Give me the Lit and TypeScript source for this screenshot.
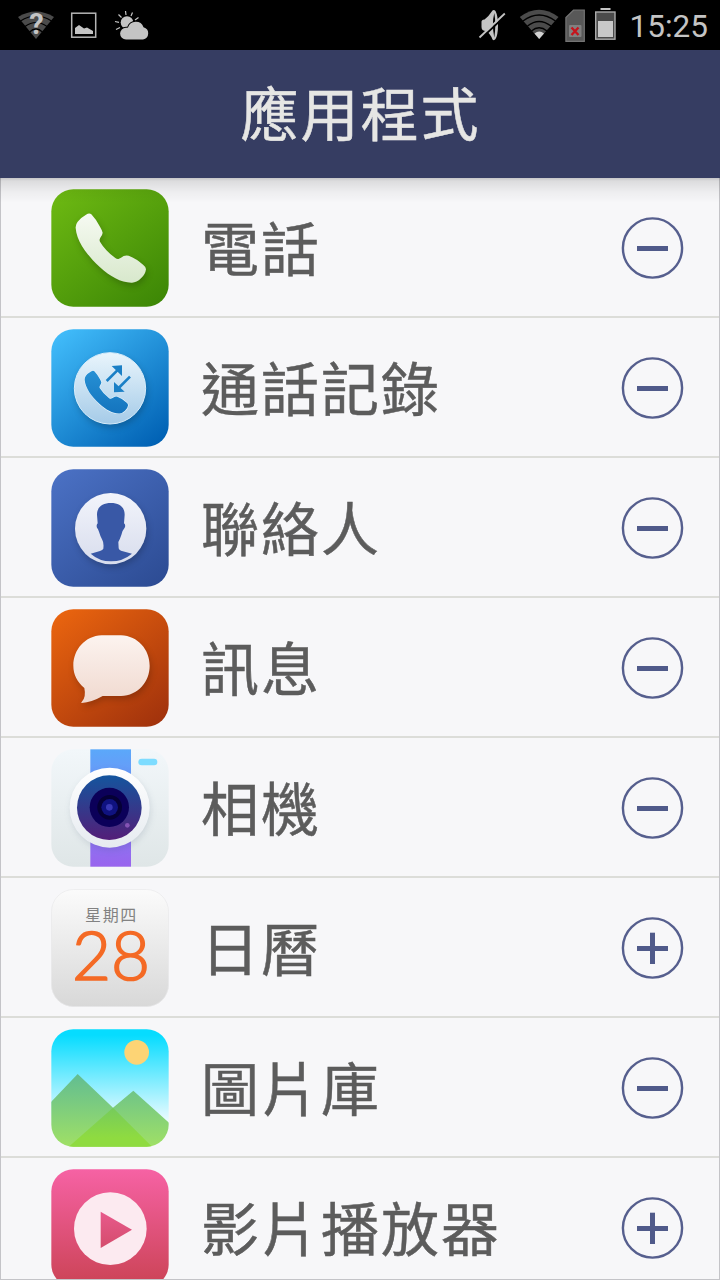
import { LitElement, html, svg, css } from 'lit';
import type { TemplateResult, SVGTemplateResult } from 'lit';
import { customElement, property } from 'lit/decorators.js';

type IconName = 'phone' | 'calls' | 'contacts' | 'messages' | 'camera' | 'calendar' | 'gallery' | 'video';

interface AppEntry {
  icon: IconName;
  label: string;
  added: boolean;
}

const apps: AppEntry[] = [
  { icon: 'phone', label: '電話', added: true },
  { icon: 'calls', label: '通話記錄', added: true },
  { icon: 'contacts', label: '聯絡人', added: true },
  { icon: 'messages', label: '訊息', added: true },
  { icon: 'camera', label: '相機', added: true },
  { icon: 'calendar', label: '日曆', added: false },
  { icon: 'gallery', label: '圖片庫', added: true },
  { icon: 'video', label: '影片播放器', added: false },
];

const handset =
  'M124 79Q118 74 108 80Q92 89 83 101Q76 110 77 120C80 160 108 198 150 238C180 266 215 285 246 284Q260 284 273 271Q286 260 288 244Q288 237 280 231Q260 212 236 203Q228 201 221 204Q212 210 207 212Q202 214 196 210Q165 187 150 161Q147 156 151 149Q158 139 158 134Q157 128 150 116Q139 95 124 79Z';

const diagonal = (from: string, to: string) => svg`
  <linearGradient id="tile" x1="0.1" y1="0" x2="0.9" y2="1">
    <stop offset="0" stop-color=${from} /><stop offset="1" stop-color=${to} />
  </linearGradient>`;

const vertical = (id: string, from: string, to: string) => svg`
  <linearGradient id=${id} x1="0" y1="0" x2="0" y2="1">
    <stop offset="0" stop-color=${from} /><stop offset="1" stop-color=${to} />
  </linearGradient>`;

const tile = svg`<rect x="4" y="4" width="352" height="352" rx="66" fill="url(#tile)" />`;

// 每個圖示皆以 360 × 360 為畫布
const icons: Record<IconName, SVGTemplateResult> = {
  phone: svg`
    <defs>${diagonal('#6cb812', '#3d8706')}${vertical('fg', '#f6faf2', '#d8e8cc')}</defs>
    ${tile}
    <path class="lifted" d=${handset} fill="url(#fg)" />`,

  calls: svg`
    <defs>${diagonal('#41bcfa', '#0060b3')}${vertical('fg', '#e9f5fc', '#a5cbe8')}${vertical('ink', '#2690d4', '#1474be')}</defs>
    ${tile}
    <circle class="lifted" cx="180" cy="181" r="107" fill="url(#fg)" stroke="#d9edfa" stroke-width="3" />
    <path d=${handset} transform="translate(56.5 81) scale(.617)" fill="url(#ink)" stroke="#e4f3fc" stroke-width="6" paint-order="stroke" />
    <g fill="#1b80c6">
      <path d="M170 159L202 127M240 146L206 180" stroke="#1b80c6" stroke-width="8" />
      <path d="M216 112L185 114L216 144ZM192 193L192 162L224 191Z" />
    </g>`,

  contacts: svg`
    <defs>${diagonal('#4a70c3', '#2d4c94')}${vertical('fg', '#f2f4fb', '#d8dded')}</defs>
    ${tile}
    <circle class="lifted" cx="182" cy="182" r="107" fill="url(#fg)" />
    <path
      d="M183 105C157 105 141 117 141 140L143 166Q138 171 141 179Q144 182 147 191Q151 205 157 216Q162 224 160 242Q158 246 150 249L122 257Q148 280 183 280Q218 280 246 257L213 248Q206 245 206 241L205 222Q210 213 214 201Q218 185 224 179Q228 171 222 166L224 140C224 117 208 105 183 105Z"
      fill="#3958a6"
    />`,

  messages: svg`
    <defs>${diagonal('#e9640f', '#a1320c')}${vertical('fg', '#fcf3ef', '#f0d9cf')}</defs>
    ${tile}
    <path
      class="lifted"
      d="M155 82H213C264 84 299 125 299 173C299 221 264 262 213 264H158Q125 283 95 285Q92 284 95 282Q109 268 103 240C82 222 70 200 70 173C70 125 105 84 155 82Z"
      fill="url(#fg)"
    />`,

  camera: svg`
    <defs>
      ${vertical('tile', '#f2f7fa', '#dfe6e7')}${vertical('strip', '#5ba8fa', '#9a64ee')}
      ${vertical('ring', '#ffffff', '#e6ebf0')}${vertical('lens', '#14559e', '#531e78')}
    </defs>
    ${tile}
    <rect x="121" y="4" width="122" height="352" fill="url(#strip)" />
    <rect x="265" y="32" width="57" height="20" rx="10" fill="#7ddcff" />
    <circle class="lifted soft" cx="179" cy="179" r="120" fill="url(#ring)" />
    <circle cx="178" cy="179" r="97" fill="url(#lens)" />
    <circle cx="178" cy="178" r="59" fill="#0b0059" />
    <circle cx="179" cy="178" r="37" fill="#050036" />
    <circle cx="179" cy="178" r="25" fill="#0f1280" />
    <circle cx="178" cy="178" r="10" fill="#3838b4" />
    <circle cx="232" cy="232" r="7" fill="#8453b4" />`,

  calendar: svg`
    <defs>${vertical('tile', '#fbfbfb', '#d8d8d8')}</defs>
    ${tile}
    <rect x="4.500" y="4.500" width="351" height="351" rx="66" fill="none" stroke="#e8e8ea" stroke-width="2" />
    <text class="weekday" x="182" y="100" text-anchor="middle" textLength="154">星期四</text>
    <text class="day" x="183" y="277" text-anchor="middle" textLength="234" lengthAdjust="spacingAndGlyphs">28</text>`,

  gallery: svg`
    <defs>
      <linearGradient id="tile" x1="0" y1="0" x2="0" y2="1">
        <stop offset="0.050" stop-color="#06dcff" /><stop offset="0.800" stop-color="#f2fcff" />
      </linearGradient>
      <linearGradient id="hill" gradientUnits="userSpaceOnUse" x1="0" y1="138" x2="0" y2="356">
        <stop offset="0" stop-color="#61bd92" /><stop offset="1" stop-color="#a0e065" />
      </linearGradient>
      <linearGradient id="near" gradientUnits="userSpaceOnUse" x1="0" y1="239" x2="0" y2="330">
        <stop offset="0" stop-color="#76cb5c" /><stop offset="1" stop-color="#8fdb40" />
      </linearGradient>
      <clipPath id="frame"><rect x="4" y="4" width="352" height="352" rx="66" /></clipPath>
    </defs>
    ${tile}
    <circle cx="260" cy="73" r="37" fill="#fdd475" />
    <g clip-path="url(#frame)">
      <path d="M0 225L83 138L189 239L250 188L360 287V360H0Z" fill="url(#hill)" />
      <path d="M52 360L189 239L310 360Z" fill="url(#near)" />
    </g>`,

  video: svg`
    <defs>${vertical('tile', '#f662a4', '#cb4355')}${vertical('play', '#e85a8c', '#d44c6c')}</defs>
    ${tile}
    <circle cx="181" cy="182" r="109" fill="#fceaf0" />
    <path d="M152 131L246 185L152 240Z" fill="url(#play)" />`,
};

@customElement('status-bar')
export class StatusBar extends LitElement {
  @property({ type: String }) time = '';

  static styles = css`
    :host {
      display: flex;
      justify-content: space-between;
      box-sizing: border-box;
      height: 50px;
      padding: 0 12px 0 17px;
      background: #000;
      color: #c4c4c4;
    }

    .group {
      display: flex;
      align-items: center;
    }

    .notices {
      gap: 15px;
    }

    svg {
      display: block;
      height: 50px;
    }

    .mark {
      font: 700 29px/1 Roboto, sans-serif;
      fill: #c4c4c4;
    }

    .clock {
      margin-left: 13px;
      padding-top: 3px;
      font: 400 31.5px/47px Roboto, sans-serif;
      white-space: nowrap;
    }
  `;

  render() {
    return html`
      <div class="group notices">
        <svg width="38" viewBox="0 0 38 50">
          <path d="M1 17Q19 6 37 17L19 39Z" fill="#4b4b4b" />
          <path d="M3.500 21Q19 11 34.500 21M8 26.500Q19 18.500 30 26.500M12.500 32Q19 26 25.500 32" fill="none" stroke="#000" stroke-width="1.200" />
          <text class="mark" x="19.500" y="34" text-anchor="middle">?</text>
        </svg>
        <svg width="28" viewBox="70 0 28 50">
          <rect x="71.700" y="13.200" width="24" height="24" fill="none" stroke="#b5b5b5" stroke-width="1.500" />
          <path d="M75 34V28L79 25L84 28.500L87 27.500L93 31V34Z" fill="#c4c4c4" />
        </svg>
        <svg width="38" viewBox="113 0 38 50">
          <path d="M125.500 11L126 15M118.500 14.500L121.500 17.500M115 21.500L119 22.300M116 29.500L120 27.500M132.500 12.500L131 16M138.500 17.500L135 20" stroke="#c4c4c4" stroke-width="1.200" />
          <circle cx="127" cy="22.500" r="6.300" fill="#c4c4c4" />
          <path d="M126 39.500A5.800 5.800 0 0 1 126 27.700Q127 28 128 27.500A8.200 8.200 0 0 1 143.500 27.200A6.300 6.300 0 0 1 143 39.500Z" fill="#c4c4c4" stroke="#000" stroke-width="2" paint-order="stroke" />
        </svg>
      </div>
      <div class="group">
        <svg width="140" viewBox="477 0 140 50">
          <path d="M481.500 23Q481 19.500 484.500 19.500Q489 16 492.500 10.500Q494 9.500 495.500 11Q498 16 498 25Q498 35 495.500 39Q494 41 492.500 39.500Q490 33 486 31Q481.500 31 481.500 27Z" fill="#c4c4c4" />
          <path d="M494.300 13Q491.500 24 494.300 37.500Q496.300 25 494.300 13Z" fill="#000" />
          <path d="M480.800 38.800L506 15" stroke="#000" stroke-width="2" />
          <path d="M479.500 37.500L504.800 13.500" stroke="#c4c4c4" stroke-width="1.800" />

          <path d="M519.800 17Q539 2.500 558.500 17L539.200 39Z" fill="#4b4b4b" />
          <path d="M523 21Q539 9 555.500 21M527.500 26Q539 17 551 26M531.500 31Q539 24.500 547 31" fill="none" stroke="#000" stroke-width="1.500" />
          <path d="M534.500 33.500Q539.200 29.500 544 33.500L539.200 39Z" fill="#d2d2d2" />

          <path d="M565.900 41.300V17.500L573.500 10.200H584.300V41.300Z" fill="#585858" stroke="#747474" stroke-width="1.200" />
          <rect x="569" y="25" width="12.500" height="12" rx="1" fill="#808080" />
          <path d="M571.500 27.500L578.500 35M578.500 27.500L571.500 35" stroke="#c5141c" stroke-width="2.400" />

          <rect x="600.500" y="8" width="10" height="2" fill="#c4c4c4" />
          <rect x="595.700" y="12" width="19.300" height="27.200" fill="#4b4b4b" stroke="#aaa" stroke-width="1.400" />
          <rect x="598" y="21" width="15" height="16" fill="#c8c8c8" />
        </svg>
        <span class="clock">${this.time}</span>
      </div>
    `;
  }
}

@customElement('app-item')
export class AppItem extends LitElement {
  @property({ attribute: false }) entry!: AppEntry;

  static styles = css`
    :host {
      display: flex;
      align-items: center;
      box-sizing: border-box;
      height: 140px;
      padding: 2px 35px 0 49px;
      border-bottom: 2px solid #dcddd9;
      background: #f7f7f9;
    }

    svg {
      display: block;
      flex: none;
    }

    .lifted {
      filter: drop-shadow(4px 10px 10px rgb(0 0 0 / 0.2));
    }

    .soft {
      filter: drop-shadow(3px 8px 10px rgb(40 60 90 / 0.13));
    }

    .weekday {
      font: 400 48px 'Noto Sans CJK TC', sans-serif;
      fill: #828282;
    }

    .day {
      font: 300 200px Lato, sans-serif;
      fill: #f46a25;
      stroke: #f46a25;
      stroke-width: 5px;
    }

    .label {
      flex: 1;
      margin-left: 31px;
      padding-bottom: 4px;
      color: #5c5c5c;
      font: 400 58px/90px 'Noto Sans CJK TC', sans-serif;
      letter-spacing: 2px;
      -webkit-text-stroke: 0.5px #5c5c5c;
      white-space: nowrap;
    }
  `;

  renderToggle(): TemplateResult {
    return html`
      <svg width="64" height="64" viewBox="0 0 64 64">
        <circle cx="32.500" cy="32" r="29.600" fill="none" stroke="#565f8e" stroke-width="2.400" />
        <rect x="17" y="30" width="31" height="5" fill="#505a8a" />
        ${this.entry.added ? '' : svg`<rect x="30" y="16.700" width="5" height="31.300" fill="#505a8a" />`}
      </svg>
    `;
  }

  render() {
    return html`
      <svg width="120" height="120" viewBox="0 0 360 360">${icons[this.entry.icon]}</svg>
      <span class="label">${this.entry.label}</span>
      ${this.renderToggle()}
    `;
  }
}

@customElement('app-root')
export class AppRoot extends LitElement {
  static styles = css`
    :host {
      display: flex;
      flex-direction: column;
      width: 720px;
      height: 1280px;
      overflow: hidden;
      background: #f7f7f9;
    }

    .title {
      position: relative;
      flex: none;
      box-sizing: border-box;
      height: 128px;
      margin: 0;
      padding-left: 1px;
      background: #363d62;
      color: #e6e6e4;
      font: 400 58px/122px 'Noto Sans CJK TC', sans-serif;
      letter-spacing: 2px;
      -webkit-text-stroke: 0.5px #e6e6e4;
      text-align: center;
    }

    /* 標題列投在清單上的陰影 */
    .title::after {
      content: '';
      position: absolute;
      top: 100%;
      left: 0;
      right: 0;
      height: 25px;
      background: linear-gradient(rgb(0 0 0 / 0.2), rgb(0 0 0 / 0.11) 3px, rgb(0 0 0 / 0.04) 14px, transparent);
    }

    .list {
      flex: 1;
      min-height: 0;
      overflow: hidden;
      border: solid #c4c4c8;
      border-width: 0 1px 1px;
    }
  `;

  render() {
    return html`
      <status-bar time="15:25"></status-bar>
      <h1 class="title">應用程式</h1>
      <div class="list">${apps.map((entry) => html`<app-item .entry=${entry}></app-item>`)}</div>
    `;
  }
}

declare global {
  interface HTMLElementTagNameMap {
    'status-bar': StatusBar;
    'app-item': AppItem;
    'app-root': AppRoot;
  }
}
